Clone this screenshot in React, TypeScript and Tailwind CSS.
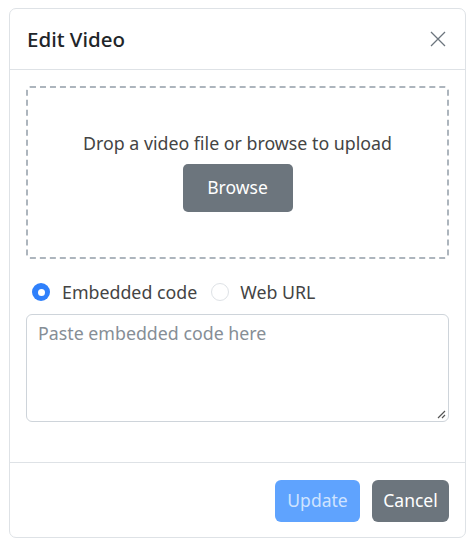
import React from "react";

export default function App() {
  return (
    <div className="w-[472px] h-[544px] bg-white pl-[9px] pt-[8px]" style={{ fontFamily: '"Noto Sans", "Open Sans", sans-serif' }}>
      <div className="w-[457px] h-[530px] border border-[#dee2e6] rounded-[7px] flex flex-col">
        <div className="h-[61px] border-b border-[#dee2e6] flex items-center justify-between pl-[17px] pr-[19px] shrink-0">
          <span className="text-[20.5px] font-medium text-[#212529]">Edit Video</span>
          <svg width="16" height="16" viewBox="0 0 16 16" className="text-[#6c757d]">
            <path d="M1 1 L15 15 M15 1 L1 15" stroke="currentColor" strokeWidth="1.3" />
          </svg>
        </div>
        <div className="flex-1 px-[16px] pt-[16px]">
          <div className="h-[173px] border-2 border-dashed border-[#adb5bd] rounded-[4px] flex flex-col items-center justify-center gap-[8px] pb-[4px]">
            <span className="text-[17.8px] leading-[26px] text-[#444]">Drop a video file or browse to upload</span>
            <button className="w-[110px] h-[48px] bg-[#6c757d] rounded-[5px] text-white text-[17.5px]">Browse</button>
          </div>
          <div className="flex items-center h-[24px] mt-[21px] pl-[6px] text-[17.8px] text-[#444]">
            <span className="w-[18px] h-[18px] rounded-full bg-[#2f80fb] flex items-center justify-center">
              <span className="w-[7px] h-[7px] rounded-full bg-white" />
            </span>
            <span className="ml-[12px]">Embedded code</span>
            <span className="ml-[14px] w-[18px] h-[18px] rounded-full border border-[#dee2e6] bg-white" />
            <span className="ml-[11px]">Web URL</span>
          </div>
          <div className="relative mt-[10px] h-[108px] border border-[#ced4da] rounded-[6px] px-[11px] pt-[5px]">
            <span className="text-[17.8px] text-[#868e96]">Paste embedded code here</span>
            <svg width="9" height="9" viewBox="0 0 9 9" className="absolute right-[2px] bottom-[2px]">
              <path d="M8 1 L1 8 M8 5 L5 8" stroke="#555" strokeWidth="1.2" />
            </svg>
          </div>
        </div>
        <div className="h-[75px] border-t border-[#dee2e6] flex items-center justify-end gap-[12px] pr-[16px] pt-[1px] shrink-0">
          <button className="w-[85px] h-[42px] rounded-[6px] bg-[#5fa3fe] text-[#cfe3ff] text-[17.5px]">Update</button>
          <button className="w-[77px] h-[42px] rounded-[6px] bg-[#6c757d] text-white text-[17.5px]">Cancel</button>
        </div>
      </div>
    </div>
  );
}
